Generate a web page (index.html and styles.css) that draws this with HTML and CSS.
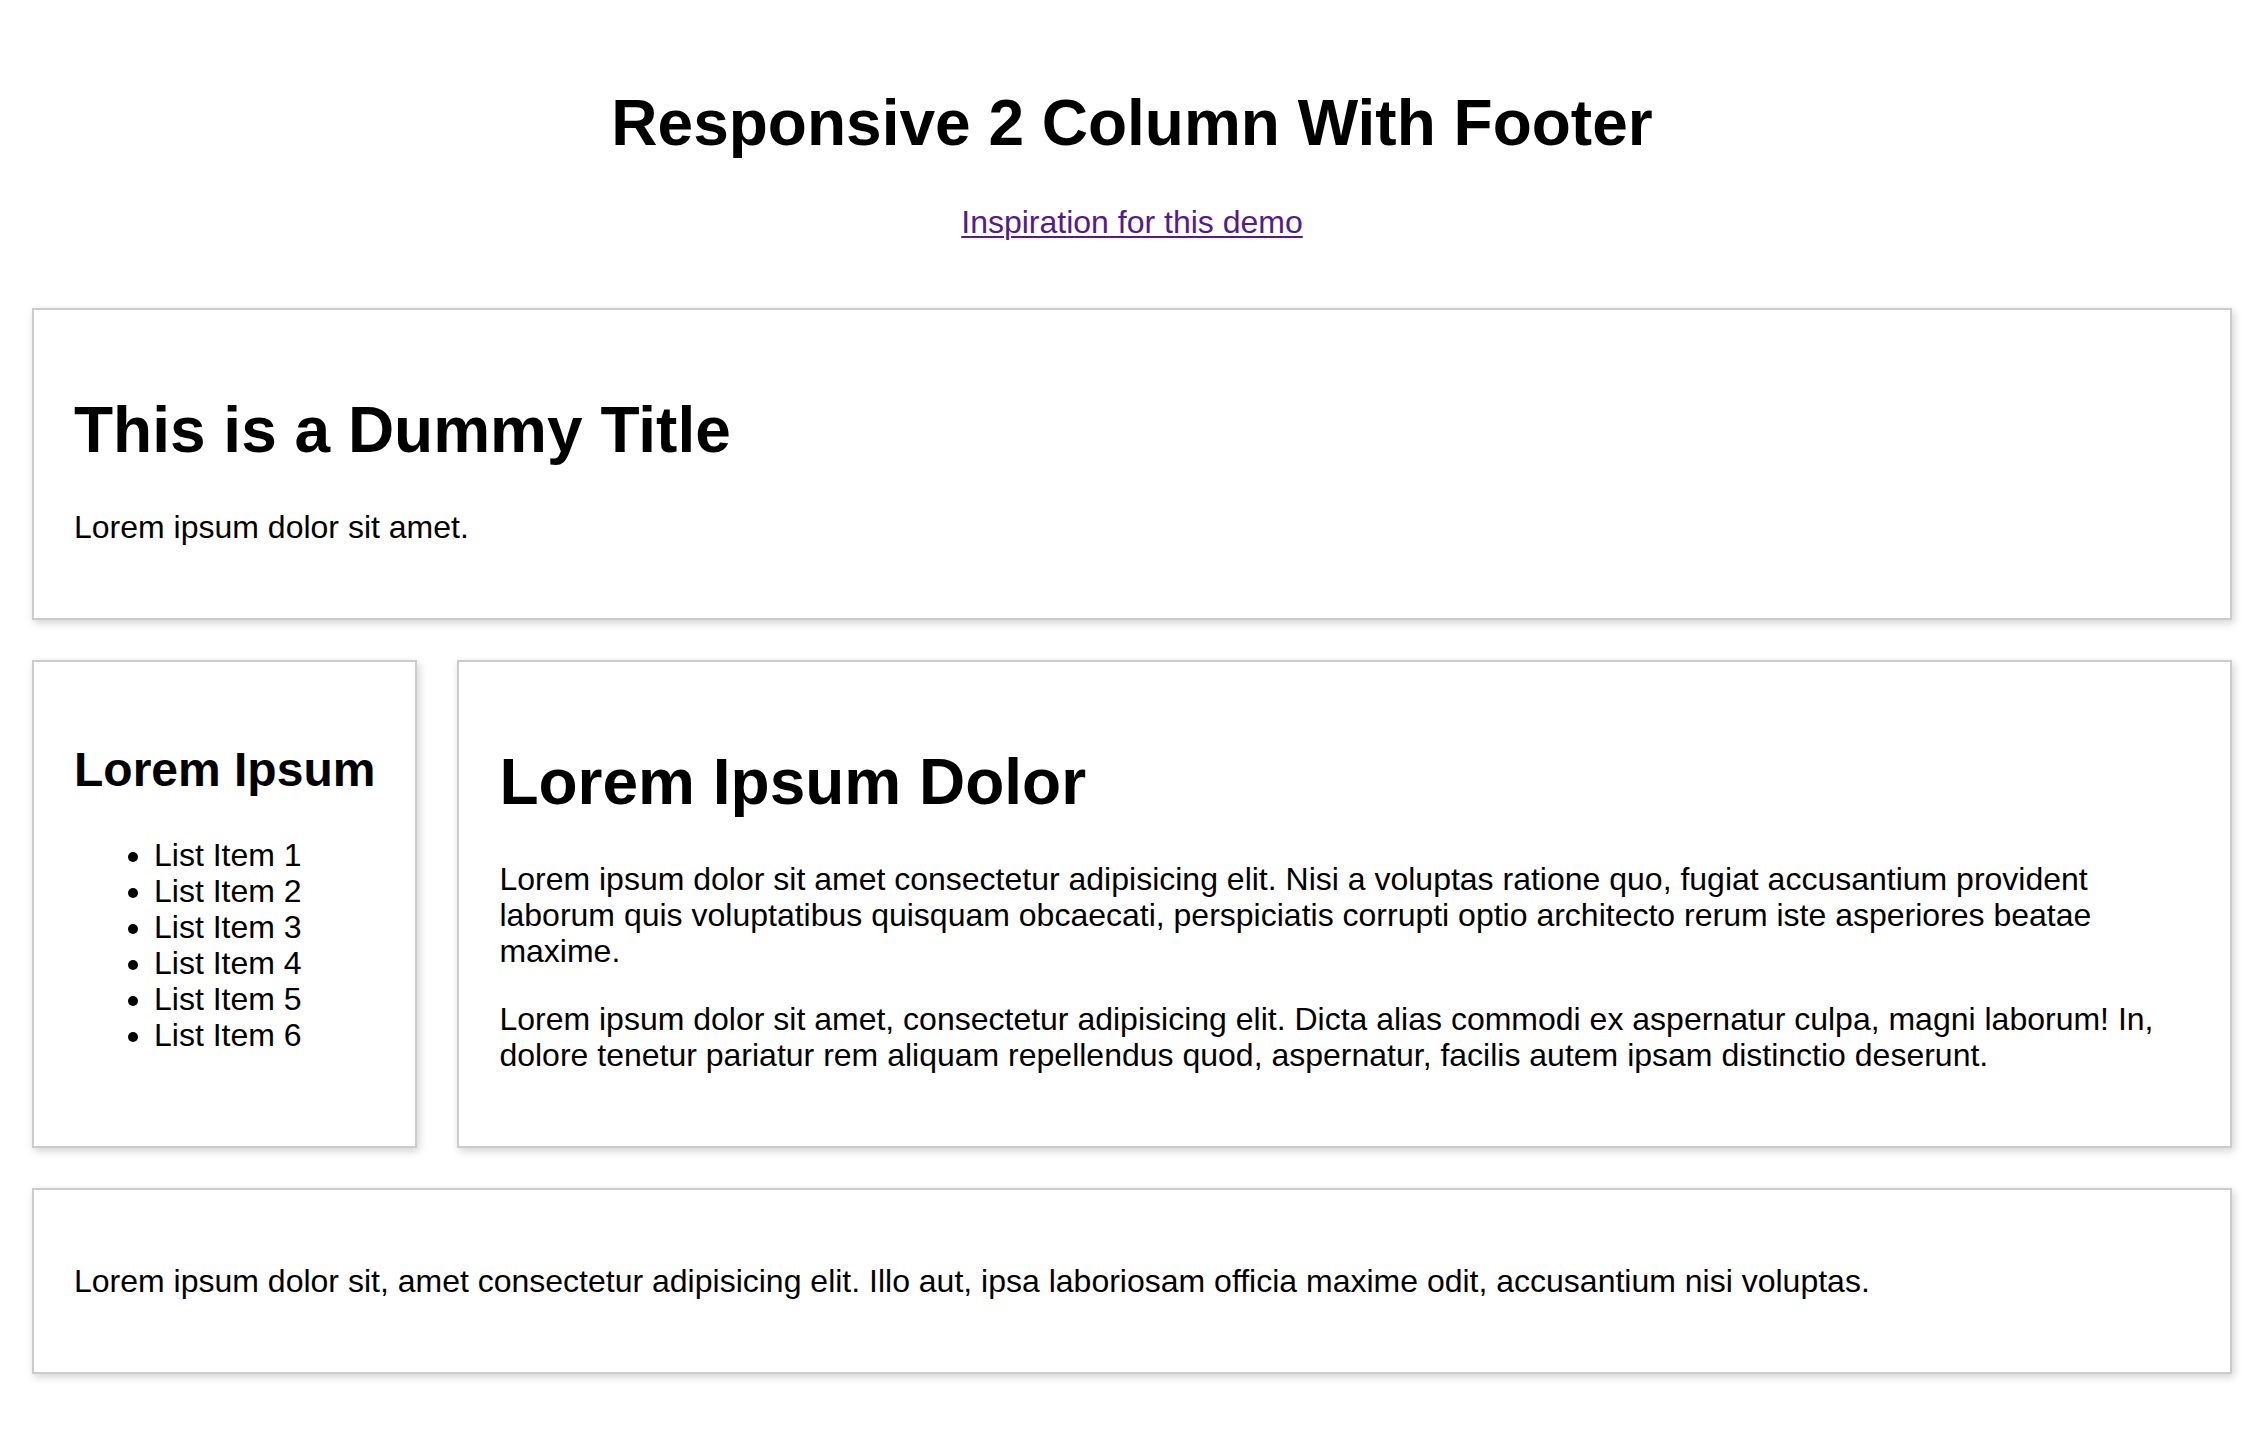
FILE: index.html
```html
<!DOCTYPE html>
<html lang="en">
<head>
<meta charset="utf-8">
<title>Responsive 2 Column With Footer</title>
<link rel="stylesheet" href="styles.css">
</head>
<body>
  <header class="page-header">
    <h1 class="page-title">Responsive 2 Column With Footer</h1>
    <p class="page-link"><a href="#" class="demo-link">Inspiration for this demo</a></p>
  </header>
  <main class="layout">
    <section class="card card-hero">
      <h1 class="title">This is a Dummy Title</h1>
      <p class="text">Lorem ipsum dolor sit amet.</p>
    </section>
    <div class="columns">
      <aside class="card card-side">
        <h2 class="side-title">Lorem Ipsum</h2>
        <ul class="side-list">
          <li>List Item 1</li>
          <li>List Item 2</li>
          <li>List Item 3</li>
          <li>List Item 4</li>
          <li>List Item 5</li>
          <li>List Item 6</li>
        </ul>
      </aside>
      <article class="card card-main">
        <h1 class="title">Lorem Ipsum Dolor</h1>
        <p class="text">Lorem ipsum dolor sit amet consectetur adipisicing elit. Nisi a voluptas ratione quo, fugiat accusantium provident laborum quis voluptatibus quisquam obcaecati, perspiciatis corrupti optio architecto rerum iste asperiores beatae maxime.</p>
        <p class="text">Lorem ipsum dolor sit amet, consectetur adipisicing elit. Dicta alias commodi ex aspernatur culpa, magni laborum! In, dolore tenetur pariatur rem aliquam repellendus quod, aspernatur, facilis autem ipsam distinctio deserunt.</p>
      </article>
    </div>
    <footer class="card card-footer">
      <p class="text">Lorem ipsum dolor sit, amet consectetur adipisicing elit. Illo aut, ipsa laboriosam officia maxime odit, accusantium nisi voluptas.</p>
    </footer>
  </main>
</body>
</html>
```
FILE: styles.css
```css
html, body {
  margin: 0;
  padding: 0;
  background: #fff;
}

body {
  font-family: "Liberation Sans", Arial, Helvetica, sans-serif;
  font-size: 32px;
  line-height: 1.125;
  color: #000;
}

.page-header {
  text-align: center;
  padding: 44px 32px 36px;
}

.page-title {
  font-size: 64px;
  font-weight: bold;
  margin: 43px 0 45px;
}

.page-link {
  margin: 32px 0;
}

.demo-link {
  color: #551a8b;
  text-decoration: underline;
  text-underline-offset: 3px;
  text-decoration-thickness: 2px;
}

.layout {
  display: flex;
  flex-direction: column;
  gap: 40px;
  padding: 0 32px 64px;
}

.card {
  background: #fff;
  border: 2px solid #cccccc;
  padding: 41px 40px;
  box-shadow: 2px 3px 8px rgba(0, 0, 0, 0.18);
}

.title {
  font-size: 64px;
  font-weight: bold;
  margin: 43px 0;
}

.text {
  margin: 32px 0;
}

.columns {
  display: grid;
  grid-template-columns: auto 1fr;
  gap: 40px;
  align-items: stretch;
}

.side-title {
  font-size: 48px;
  font-weight: bold;
  margin: 40px 0;
}

.side-list {
  margin: 32px 0;
  padding-left: 80px;
}
```
